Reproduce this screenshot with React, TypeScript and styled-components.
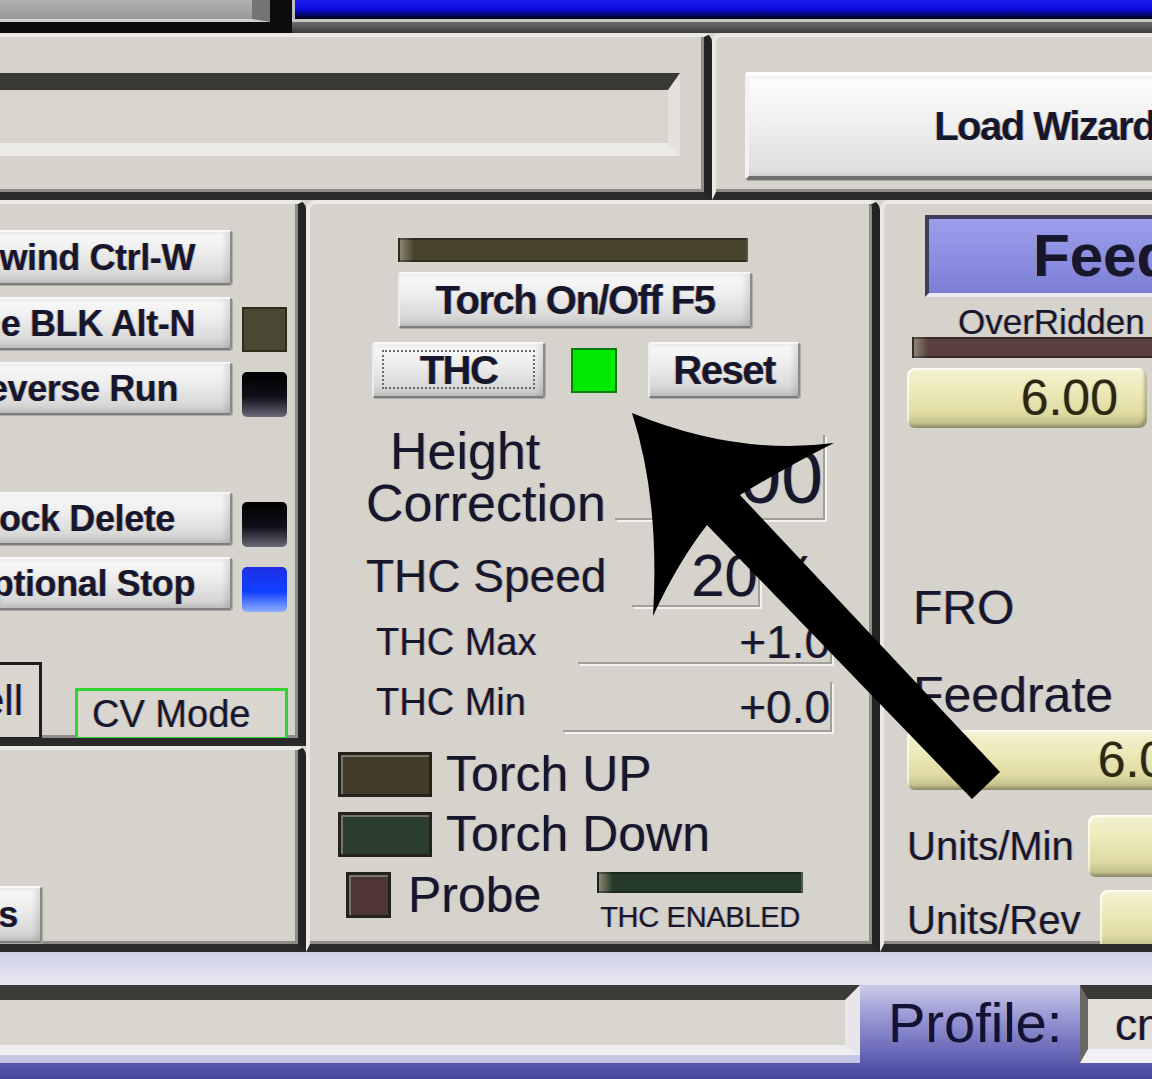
import styled, { createGlobalStyle } from "styled-components";

const face = "#d6d3cd";
const ink = "#16162c";

const GlobalStyle = createGlobalStyle`
  html, body {
    margin: 0;
    padding: 0;
    background: ${face};
    overflow: hidden;
  }
  body {
    font-family: "Liberation Sans", Arial, sans-serif;
    color: ${ink};
    text-shadow: -1px 0 0 rgba(200, 130, 30, 0.35), 1px 0 0 rgba(30, 70, 200, 0.3);
  }
`;

const Screen = styled.div`
  position: relative;
  width: 1152px;
  height: 1079px;
  overflow: hidden;
  background: ${face};
  display: grid;
  grid-template-rows: 33px 167px 752px 127px;
`;

// top strip (bits of the screen above)
const TopStrip = styled.div`
  display: flex;
  background: #0c0c0c;
`;

const GreyTab = styled.div`
  width: 252px;
  height: 19px;
  background: linear-gradient(#b0b0b0, #999999);
  border-right: 18px solid #747474;
  border-bottom: 3px solid #d2d2d2;
  margin-right: 22px;
`;

const BlueWrap = styled.div`
  flex: 1;
  display: flex;
  flex-direction: column;
`;

const BlueRow = styled.div`
  display: flex;
  height: 22px;
`;

const BlueBar = styled.div`
  flex: 1;
  background: linear-gradient(#1c1cf2 0%, #0b0bd8 50%, #000010 100%);
  border-left: 3px solid #bdbdbd;
  border-bottom: 3px solid #c6c6c6;
`;

const GreenTab = styled.div`
  width: 24px;
  background: #c8c8c8;
  border-left: 3px solid #36d036;
  border-bottom: 3px solid #36d036;
`;

const StripShadow = styled.div`
  flex: 1;
  background: linear-gradient(#6c6c6c, #3c3c3c);
`;

// panels
const Panel = styled.div<{ $flushLeft?: boolean; $flushRight?: boolean }>`
  background: ${face};
  border-style: solid;
  border-width: 4px ${(p) => (p.$flushRight ? 0 : 8)}px 8px ${(p) => (p.$flushLeft ? 0 : 4)}px;
  border-color: #ebe9e5 #232323 #2a2a2a #ebe9e5;
  border-radius: ${(p) => (p.$flushLeft ? "0 9px" : p.$flushRight ? "9px 0" : "10px 10px")} 0 0;
  box-shadow: inset ${(p) => (p.$flushRight ? 0 : -3)}px -3px 0 #8e8c89;
  overflow: hidden;
  min-width: 0;
`;

const WizardRow = styled.div`
  display: grid;
  grid-template-columns: 712px 1fr;
`;

const StatusSlot = styled.div`
  margin-top: 36px;
  width: 668px;
  height: 53px;
  background: #d8d5cf;
  border-top: 17px solid #3a3a35;
  border-right: 12px solid #e4e1dc;
  border-bottom: 13px solid #eceae6;
`;

const Btn = styled.button`
  display: flex;
  align-items: center;
  justify-content: center;
  flex: none;
  padding: 0;
  font-family: "Liberation Sans", Arial, sans-serif;
  font-weight: bold;
  font-size: 40px;
  letter-spacing: -1.5px;
  color: ${ink};
  text-shadow: -1px 0 0 rgba(200, 130, 30, 0.4), 1px 0 0 rgba(30, 70, 200, 0.3);
  white-space: nowrap;
  background: linear-gradient(180deg, #fafafa 0%, #ededed 40%, #d9d9d9 80%, #c6c6c6 100%);
  border: 2px solid;
  border-color: #f7f7f7 #8a8a8a #7c7c7c #ececec;
  border-radius: 3px;
  box-shadow: inset -4px 0 6px rgba(0, 0, 0, 0.12), 1px 1px 0 #aeaca8;
`;

const WizardButton = styled(Btn)`
  margin: 35px 0 0 29px;
  width: 620px;
  height: 108px;
  background: linear-gradient(180deg, #fdfdfd 0%, #f0f0f0 45%, #dcdcdc 100%);
  border-width: 4px;
  border-color: #ffffff #8c8c8c #6e6e6e #f2f2f2;
`;

const Columns = styled.div`
  display: grid;
  grid-template-columns: 306px 574px 272px;
`;

const LeftCol = styled.div`
  display: grid;
  grid-template-rows: 546px 206px;
  min-width: 0;
`;

// left column: run controls
const CtlRow = styled.div<{ $top: number }>`
  display: flex;
  align-items: flex-end;
  gap: 10px;
  margin-top: ${(p) => p.$top}px;
`;

const CtlButton = styled(Btn)<{ $pad: number; $h?: number; $w?: number }>`
  width: ${(p) => p.$w ?? 340}px;
  height: ${(p) => p.$h ?? 55}px;
  margin-left: -108px;
  justify-content: flex-end;
  padding-right: ${(p) => p.$pad}px;
  font-size: 36px;
  letter-spacing: -0.4px;
`;

const Lamp = styled.div<{ $tone: "olive" | "black" | "blue" }>`
  width: 45px;
  height: 45px;
  flex: none;
  margin-bottom: -2px;
  box-sizing: border-box;
  border-radius: ${(p) => (p.$tone === "olive" ? 0 : 5)}px;
  background: ${(p) =>
    p.$tone === "olive"
      ? "#4a4732"
      : p.$tone === "black"
      ? "linear-gradient(180deg, #000 0%, #0f0f18 55%, #6a6a78 100%)"
      : "linear-gradient(180deg, #1e2fe4 0%, #1040ff 55%, #90b0ff 100%)"};
  border: ${(p) => (p.$tone === "olive" ? "2px solid #2e2c1f" : "none")};
`;

const StateBox = styled.div<{ $on?: boolean; $w: number; $h: number }>`
  flex: none;
  box-sizing: border-box;
  width: ${(p) => p.$w}px;
  height: ${(p) => p.$h}px;
  border: 3px solid ${(p) => (p.$on ? "#2fd42f" : "#1e1e1e")};
  background: #d9d6d0;
  font-size: 38px;
  line-height: ${(p) => p.$h - 6}px;
  white-space: nowrap;
`;

const DwellBox = styled(StateBox)`
  margin-left: -110px;
  text-align: right;
  padding-right: 16px;
  font-size: 42px;
`;

const CvBox = styled(StateBox)`
  margin-left: 33px;
  padding-left: 14px;
`;

const BottomRow = styled.div`
  display: flex;
  align-items: flex-end;
  margin-top: 52px;
`;

// middle: torch height control
const Olive = styled.div<{ $w: number; $h: number; $tone: string }>`
  width: ${(p) => p.$w}px;
  height: ${(p) => p.$h}px;
  flex: none;
  background: linear-gradient(90deg, #8a8672 0px, ${(p) => p.$tone} 14px);
  border: 2px solid rgba(0, 0, 0, 0.35);
  box-sizing: border-box;
`;

const Block = styled.div<{ $top: number; $left: number }>`
  margin: ${(p) => p.$top}px 0 0 ${(p) => p.$left}px;
`;

const TorchButton = styled(Btn)`
  width: 354px;
  height: 56px;
`;

const FlexRow = styled.div<{ $top: number; $left: number; $h: number; $align?: string }>`
  display: flex;
  align-items: ${(p) => p.$align ?? "center"};
  height: ${(p) => p.$h}px;
  margin: ${(p) => p.$top}px 0 0 ${(p) => p.$left}px;
`;

const SmallButton = styled(Btn)<{ $w: number; $focus?: boolean }>`
  width: ${(p) => p.$w}px;
  height: 56px;
  position: relative;
  &::after {
    content: "";
    display: ${(p) => (p.$focus ? "block" : "none")};
    position: absolute;
    inset: 6px 8px 7px 8px;
    border: 2px dotted #6a6a6a;
  }
`;

const GreenLed = styled.div`
  width: 46px;
  height: 45px;
  box-sizing: border-box;
  margin: 0 31px 0 26px;
  background: #00ea00;
  border: 2px solid #0d7a0d;
  align-self: center;
`;

const Caption = styled.div<{ $size: number; $w?: number; $lh?: number; $indent?: number }>`
  flex: none;
  font-size: ${(p) => p.$size}px;
  line-height: ${(p) => (p.$lh ? `${p.$lh}px` : "inherit")};
  width: ${(p) => (p.$w ? `${p.$w}px` : "auto")};
  text-indent: ${(p) => p.$indent ?? 0}px;
  white-space: nowrap;
`;

const Sunken = styled.div<{ $w: number; $h: number; $size: number; $top?: number; $left?: number }>`
  flex: none;
  box-sizing: border-box;
  width: ${(p) => p.$w}px;
  height: ${(p) => p.$h}px;
  margin: ${(p) => p.$top ?? 0}px 0 0 ${(p) => p.$left ?? 0}px;
  border-right: 2px solid #a29f9a;
  border-bottom: 2px solid #a29f9a;
  box-shadow: 2px 2px 0 #f4f2ee;
  text-align: right;
  font-size: ${(p) => p.$size}px;
  line-height: ${(p) => p.$h}px;
  white-space: nowrap;
  overflow: hidden;
`;

const Percent = styled.div`
  font-size: 60px;
  margin-left: 5px;
`;

const TorchLamp = styled.div<{ $w: number; $tone: string }>`
  width: ${(p) => p.$w}px;
  height: 100%;
  flex: none;
  box-sizing: border-box;
  background: ${(p) => p.$tone};
  border: 3px solid #25221a;
  box-shadow: inset 2px 2px 0 #77746a;
`;

const LampText = styled.div<{ $w?: number; $gap?: number }>`
  font-size: 50px;
  line-height: 45px;
  margin-left: ${(p) => p.$gap ?? 14}px;
  width: ${(p) => (p.$w ? `${p.$w}px` : "auto")};
  white-space: nowrap;
  flex: none;
`;

const EnabledBlock = styled.div`
  display: flex;
  flex-direction: column;
  align-items: center;
  align-self: flex-start;
`;

const EnabledText = styled.div`
  margin-top: 8px;
  font-size: 29px;
  line-height: 32px;
  letter-spacing: -0.3px;
  white-space: nowrap;
`;

// right: feed rate
const FeedHeader = styled.div`
  margin: 11px 0 0 41px;
  width: 400px;
  height: 82px;
  box-sizing: border-box;
  background: linear-gradient(180deg, #9c9eea 0%, #8a8ce0 60%, #7c7ed4 100%);
  border: 4px solid;
  border-color: #3e3e5a #d8d8f0 #e8e8f4 #3e3e5a;
  font-weight: bold;
  font-size: 60px;
  line-height: 74px;
  padding-left: 104px;
  white-space: nowrap;
`;

const Dro = styled.div<{ $w: number; $h: number; $pad: number }>`
  flex: none;
  box-sizing: border-box;
  width: ${(p) => p.$w}px;
  height: ${(p) => p.$h}px;
  padding-right: ${(p) => p.$pad}px;
  text-align: right;
  font-size: 50px;
  line-height: ${(p) => p.$h}px;
  color: #2a2810;
  white-space: nowrap;
  border-radius: 8px;
  background: linear-gradient(180deg, #f4f2d2 0%, #ece9b8 40%, #dfdba2 75%, #b9b587 100%);
  box-shadow: inset -3px -3px 3px rgba(0, 0, 0, 0.22), inset 2px 2px 1px rgba(255, 255, 255, 0.7);
`;

// footer
const Footer = styled.div`
  display: grid;
  grid-template-rows: 33px 78px 16px;
  background: linear-gradient(180deg, #cfcfe6 0%, #e6e6f2 22%, #dadaee 60%, #b8b8de 100%);
`;

const StatusRow = styled.div`
  display: flex;
  align-items: flex-start;
`;

const StatusField = styled.div`
  width: 845px;
  height: 45px;
  flex: none;
  background: #d8d5ce;
  border-top: 15px solid #3c3b37;
  border-right: 15px solid #e8e6ea;
  border-bottom: 10px solid #eeedf0;
`;

const ProfileLabel = styled.div`
  width: 220px;
  height: 78px;
  flex: none;
  box-sizing: border-box;
  padding-left: 28px;
  font-size: 56px;
  line-height: 76px;
  color: #121236;
  background: linear-gradient(180deg, #cacaea 0%, #9494d2 45%, #5a5aae 100%);
`;

const ProfileInput = styled.div`
  flex: 1;
  height: 50px;
  background: #e2dfd8;
  border-top: 14px solid #3a3936;
  border-left: 8px solid #6a6864;
  border-bottom: 14px solid #f2f0f4;
  padding-left: 27px;
  font-size: 44px;
  line-height: 52px;
  white-space: nowrap;
`;

const BottomBar = styled.div`
  background: linear-gradient(#5a5aae, #44449c);
`;

const ArrowLayer = styled.svg`
  position: absolute;
  left: 0;
  top: 0;
  width: 1152px;
  height: 1079px;
  pointer-events: none;
`;

function App() {
  return (
    <>
      <GlobalStyle />
      <Screen>
        <TopStrip>
          <GreyTab />
          <BlueWrap>
            <BlueRow>
              <BlueBar />
              <GreenTab />
            </BlueRow>
            <StripShadow />
          </BlueWrap>
        </TopStrip>

        <WizardRow>
          <Panel $flushLeft>
            <StatusSlot />
          </Panel>
          <Panel $flushRight>
            <WizardButton>Load Wizards</WizardButton>
          </Panel>
        </WizardRow>

        <Columns>
          <LeftCol>
            <Panel $flushLeft>
              <CtlRow $top={26}>
                <CtlButton $pad={35}>Rewind Ctrl-W</CtlButton>
              </CtlRow>
              <CtlRow $top={12}>
                <CtlButton $pad={35} $h={53}>Single BLK Alt-N</CtlButton>
                <Lamp $tone="olive" />
              </CtlRow>
              <CtlRow $top={12}>
                <CtlButton $pad={52} $h={53}>Reverse Run</CtlButton>
                <Lamp $tone="black" />
              </CtlRow>
              <CtlRow $top={77}>
                <CtlButton $pad={55} $h={53}>Block Delete</CtlButton>
                <Lamp $tone="black" />
              </CtlRow>
              <CtlRow $top={12}>
                <CtlButton $pad={35} $h={53}>Optional Stop</CtlButton>
                <Lamp $tone="blue" />
              </CtlRow>
              <BottomRow>
                <DwellBox $w={152} $h={78}>Dwell</DwellBox>
                <CvBox $on $w={213} $h={52}>CV Mode</CvBox>
              </BottomRow>
            </Panel>
            <Panel $flushLeft>
              <CtlRow $top={136}>
                <CtlButton $pad={22} $h={57} $w={150}>Tool Paths</CtlButton>
              </CtlRow>
            </Panel>
          </LeftCol>

          <Panel>
            <Block $top={34} $left={88}>
              <Olive $w={350} $h={24} $tone="#48432c" />
            </Block>
            <Block $top={10} $left={88}>
              <TorchButton>Torch On/Off F5</TorchButton>
            </Block>
            <FlexRow $top={14} $left={62} $h={56}>
              <SmallButton $w={173} $focus>THC</SmallButton>
              <GreenLed />
              <SmallButton $w={152}>Reset</SmallButton>
            </FlexRow>
            <FlexRow $top={27} $left={56} $h={104} $align="flex-start">
              <Caption $size={52} $lh={52} $w={240} $indent={24}>
                Height
                <br />
                Correction
              </Caption>
              <Sunken $w={210} $h={85} $size={75} $top={10} $left={9}>
                0.00
              </Sunken>
            </FlexRow>
            <FlexRow $top={16} $left={56} $h={62}>
              <Caption $size={46} $w={266}>THC Speed</Caption>
              <Sunken $w={128} $h={62} $size={60}>20</Sunken>
              <Percent>%</Percent>
            </FlexRow>
            <FlexRow $top={13} $left={66} $h={44}>
              <Caption $size={38} $w={202}>THC Max</Caption>
              <Sunken $w={254} $h={44} $size={46}>+1.0</Sunken>
            </FlexRow>
            <FlexRow $top={18} $left={66} $h={50} $align="flex-start">
              <Caption $size={38} $lh={40} $w={187}>THC Min</Caption>
              <Sunken $w={269} $h={50} $size={46}>+0.0</Sunken>
            </FlexRow>
            <FlexRow $top={20} $left={28} $h={45}>
              <TorchLamp $w={94} $tone="#433c2a" />
              <LampText>Torch UP</LampText>
            </FlexRow>
            <FlexRow $top={15} $left={28} $h={45}>
              <TorchLamp $w={94} $tone="#2b3d2f" />
              <LampText>Torch Down</LampText>
            </FlexRow>
            <FlexRow $top={15} $left={36} $h={46}>
              <TorchLamp $w={45} $tone="#4f3636" />
              <LampText $w={189} $gap={17}>Probe</LampText>
              <EnabledBlock>
                <Olive $w={206} $h={21} $tone="#263a28" />
                <EnabledText>THC ENABLED</EnabledText>
              </EnabledBlock>
            </FlexRow>
          </Panel>

          <Panel $flushRight>
            <FeedHeader>Feed Rate</FeedHeader>
            <Block $top={8} $left={74}>
              <Caption $size={35} $lh={34}>OverRidden</Caption>
            </Block>
            <Block $top={-2} $left={28}>
              <Olive $w={400} $h={21} $tone="#5a403e" />
            </Block>
            <Block $top={10} $left={23}>
              <Dro $w={240} $h={60} $pad={29}>6.00</Dro>
            </Block>
            <Block $top={152} $left={29}>
              <Caption $size={48} $lh={56}>FRO</Caption>
            </Block>
            <Block $top={31} $left={29}>
              <Caption $size={50} $lh={56}>Feedrate</Caption>
            </Block>
            <Block $top={7} $left={23}>
              <Dro $w={330} $h={60} $pad={42}>6.00</Dro>
            </Block>
            <FlexRow $top={25} $left={23} $h={62}>
              <Caption $size={40} $w={181}>Units/Min</Caption>
              <Dro $w={200} $h={62} $pad={20}>0.00</Dro>
            </FlexRow>
            <FlexRow $top={13} $left={23} $h={60}>
              <Caption $size={40} $w={193}>Units/Rev</Caption>
              <Dro $w={200} $h={60} $pad={20}>0.00</Dro>
            </FlexRow>
          </Panel>
        </Columns>

        <Footer>
          <div />
          <StatusRow>
            <StatusField />
            <ProfileLabel>Profile:</ProfileLabel>
            <ProfileInput>cnc</ProfileInput>
          </StatusRow>
          <BottomBar />
        </Footer>

        <ArrowLayer viewBox="0 0 1152 1079">
          <path
            d="M632 413 Q737 456 834 443 Q790 465 740 495 L1000 772 L972 799 L707 525 Q678 562 653 616 Q660 500 632 413 Z"
            fill="#000"
          />
        </ArrowLayer>
      </Screen>
    </>
  );
}

export default App;
